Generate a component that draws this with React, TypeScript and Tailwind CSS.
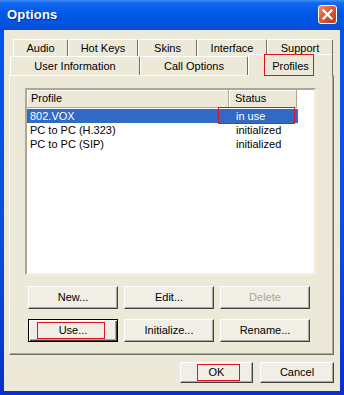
import React from 'react';

type BtnProps = {
  children: React.ReactNode;
  className?: string;
  disabled?: boolean;
  isDefault?: boolean;
  mark?: string;
};

// classic raised push button; `mark` draws the red annotation box round the caption
const Btn: React.FC<BtnProps> = ({ children, className = '', disabled = false, isDefault = false, mark }) => (
  <div
    className={`relative flex items-center justify-center bg-[#F0EEE5] border ${
      isDefault
        ? 'border-black shadow-[inset_1px_1px_0_#ffffff,inset_-1px_-1px_0_#404040,inset_-2px_-2px_0_#ACA899]'
        : 'border-t-white border-l-white border-r-[#404040] border-b-[#404040] shadow-[inset_-1px_-1px_0_#ACA899]'
    } ${disabled ? 'text-[#ACA899]' : 'text-black'} ${className}`}
  >
    <span>{children}</span>
    {mark && <span className={`absolute border border-[#E0141E] ${mark}`} />}
  </div>
);

const BackTab: React.FC<{ label: string; className: string }> = ({ label, className }) => (
  <div
    className={`h-[17px] flex items-center justify-center bg-[#ECE9D8] border-t border-l border-r border-t-white border-l-white border-r-[#716F64] rounded-t-[2px] ${className}`}
  >
    {label}
  </div>
);

const rows = [
  { name: '802.VOX', status: 'in use', selected: true },
  { name: 'PC to PC (H.323)', status: 'initialized', selected: false },
  { name: 'PC to PC (SIP)', status: 'initialized', selected: false },
];

export default function App() {
  return (
    <div className="w-[344px] h-[395px] flex flex-col bg-[linear-gradient(to_bottom,#0058EE,#0A4FD9_60%,#0831C9)] font-['Liberation_Sans',Arial,sans-serif] text-[11px] text-black overflow-hidden select-none">
      {/* title bar */}
      <div className="h-[30px] shrink-0 flex items-center justify-between pl-[7px] pr-[7px] bg-[linear-gradient(to_bottom,#3D8EF7_0%,#1467EE_10%,#0058E6_45%,#0054E0_80%,#0A4AD0_100%)]">
        <span className="text-white font-bold text-[13px] tracking-[0.2px] [text-shadow:1px_1px_0_#0A2A8A] -mt-[1px]">Options</span>
        <div className="w-[19px] h-[19px] -mt-[2px] rounded-[3px] border border-white bg-[linear-gradient(135deg,#F09070,#E05A35_45%,#C03A1A)] flex items-center justify-center">
          <svg width="11" height="11" viewBox="0 0 11 11">
            <path d="M1.5 1.5 L9.5 9.5 M9.5 1.5 L1.5 9.5" stroke="white" strokeWidth="2.2" strokeLinecap="square" />
          </svg>
        </div>
      </div>

      {/* dialog body */}
      <div className="flex-1 mx-[4px] mb-[4px] bg-[#ECE9D8] pt-[9px] pl-[5px] pr-[6px] flex flex-col">
        {/* back tab row */}
        <div className="flex ml-[4px]">
          <BackTab label="Audio" className="w-[55px]" />
          <BackTab label="Hot Keys" className="w-[70px]" />
          <BackTab label="Skins" className="w-[59px]" />
          <BackTab label="Interface" className="w-[70px]" />
          <BackTab label="Support" className="w-[66px]" />
        </div>
        {/* front tab row */}
        <div className="flex items-end h-[19px] ml-[1px]">
          <div className="w-[130px] h-[19px] flex items-center justify-center bg-[#ECE9D8] border-t border-l border-r border-t-white border-l-white border-r-[#716F64] rounded-t-[2px]">
            User Information
          </div>
          <div className="w-[108px] h-[19px] flex items-center justify-center bg-[#ECE9D8] border-t border-l border-r border-t-white border-l-white border-r-[#716F64] rounded-t-[2px]">
            Call Options
          </div>
          <div className="relative z-10 -mb-px w-[85px] h-[22px] flex items-start justify-center pt-[3px] bg-[#ECE9D8] border-t border-l border-r border-t-white border-l-white border-r-[#716F64] rounded-t-[2px]">
            Profiles
            <span className="absolute left-[15px] -top-px w-[50px] h-[22px] border border-[#E0141E]" />
          </div>
        </div>

        {/* tab panel */}
        <div className="relative h-[280px] border border-t-white border-l-white border-r-[#716F64] border-b-[#716F64] shadow-[inset_-1px_-1px_0_#ACA899] pt-[12px] pl-[15px]">
          {/* list view */}
          <div className="relative w-[291px] h-[187px] bg-white border-2 border-t-[#ACA899] border-l-[#ACA899] border-r-[#F1EFE2] border-b-[#F1EFE2]">
            <div className="flex h-[18px] bg-[#ECE9D8]">
              <div className="w-[202px] flex items-center pl-[4px] border-r border-b border-r-[#ACA899] border-b-[#ACA899] shadow-[inset_1px_1px_0_#ffffff]">
                Profile
              </div>
              <div className="w-[68px] flex items-center pl-[6px] border-r border-b border-r-[#ACA899] border-b-[#ACA899] shadow-[inset_1px_1px_0_#ffffff]">
                Status
              </div>
              <div className="flex-1 bg-white" />
            </div>
            <div className="flex flex-col mt-[1px]">
              {rows.map(r => (
                <div
                  key={r.name}
                  className={`flex h-[14px] w-[271px] items-center ${r.selected ? 'bg-[#316AC5] text-white' : 'text-black'}`}
                >
                  <span className="w-[202px] pl-[3px]">{r.name}</span>
                  <span className="w-[69px] pl-[7px]">{r.status}</span>
                </div>
              ))}
            </div>
            <span className="absolute left-[191px] top-[17px] w-[77px] h-[17px] border border-[#E0141E]" />
          </div>

          {/* profile buttons */}
          <div className="grid grid-cols-[90px_90px_90px] gap-x-[6px] gap-y-[10px] mt-[11px] ml-[3px]">
            <Btn className="h-[23px]">New...</Btn>
            <Btn className="h-[23px]">Edit...</Btn>
            <Btn className="h-[23px]" disabled>Delete</Btn>
            <Btn className="h-[23px]" isDefault mark="left-[8px] top-[2px] w-[68px] h-[17px]">Use...</Btn>
            <Btn className="h-[23px]">Initialize...</Btn>
            <Btn className="h-[23px]">Rename...</Btn>
          </div>
        </div>

        {/* dialog buttons */}
        <div className="flex justify-end gap-[7px] mt-[7px]">
          <Btn className="w-[73px] h-[21px]" mark="left-[16px] top-[1px] w-[43px] h-[17px]">OK</Btn>
          <Btn className="w-[74px] h-[21px]">Cancel</Btn>
        </div>
      </div>
    </div>
  );
}
